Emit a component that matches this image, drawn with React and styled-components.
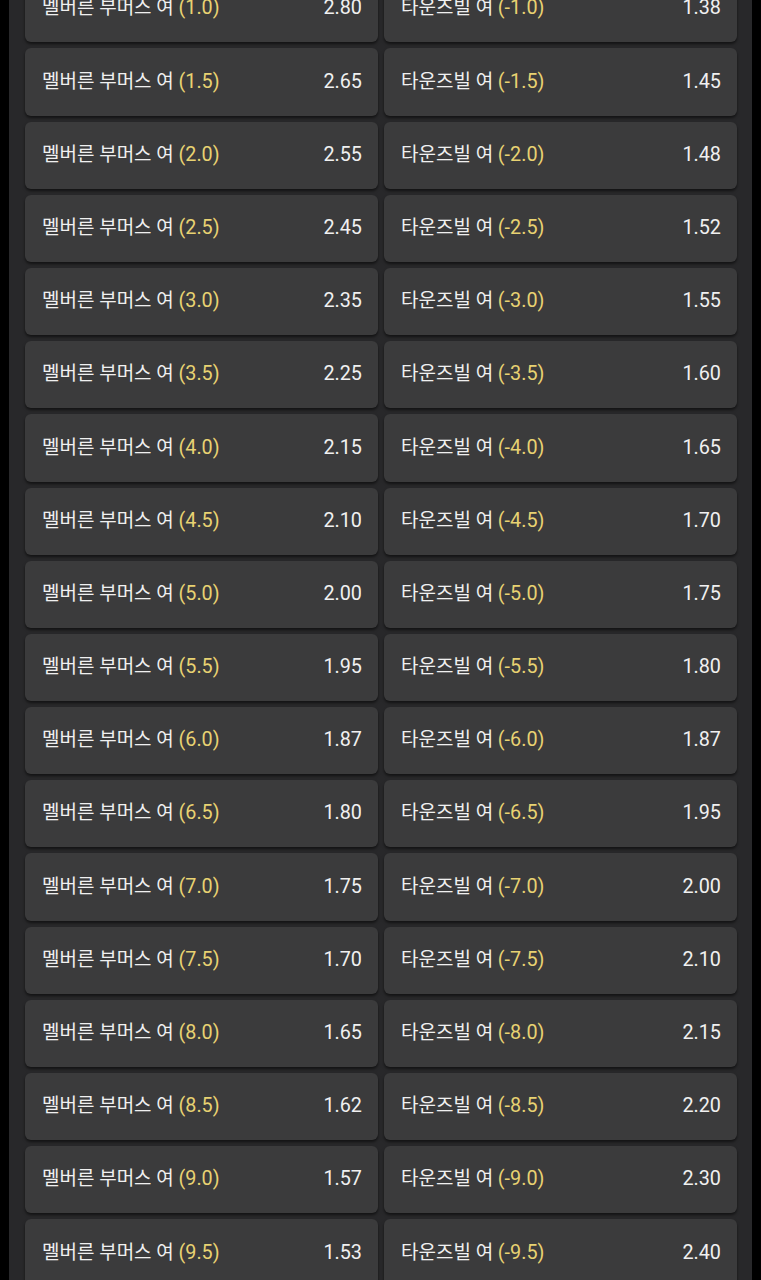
import React from "react";
import styled, { createGlobalStyle } from "styled-components";

const Global = createGlobalStyle`
  html, body { margin: 0; padding: 0; background: #000; overflow: hidden; }
  body { font-family: Roboto, "Noto Sans CJK KR", sans-serif; }
`;

const Page = styled.div`
  width: 761px;
  height: 1280px;
  overflow: hidden;
  background: #000;
  display: flex;
  justify-content: flex-start;
`;

const Panel = styled.div`
  margin-left: 9px;
  width: 743px;
  background: #28282a;
  padding: 0 15px 0 16px;
  box-sizing: border-box;
`;

const Grid = styled.div`
  margin-top: -24.8px;
  display: grid;
  grid-template-columns: 1fr 1fr;
  column-gap: 6px;
  row-gap: 6px;
`;

const Card = styled.div`
  height: 67.2px;
  box-sizing: border-box;
  background: #3b3b3c;
  border-radius: 6px;
  box-shadow: 0 2px 3px rgba(0, 0, 0, 0.55);
  display: flex;
  align-items: center;
  justify-content: space-between;
  padding: 0 16px 1px 17px;
  color: #f0f0f0;
  font-family: Roboto, "Noto Sans CJK KR", sans-serif;
  font-size: 19.8px;
  line-height: 1.2;
`;

const Label = styled.span`
  white-space: nowrap;
`;

const Name = styled.span`
  font-size: 19px;
`;

const Line = styled.span`
  color: #e8d272;
`;

const Odds = styled.span``;

const home = [
  ["1.0", "2.80"], ["1.5", "2.65"], ["2.0", "2.55"], ["2.5", "2.45"],
  ["3.0", "2.35"], ["3.5", "2.25"], ["4.0", "2.15"], ["4.5", "2.10"],
  ["5.0", "2.00"], ["5.5", "1.95"], ["6.0", "1.87"], ["6.5", "1.80"],
  ["7.0", "1.75"], ["7.5", "1.70"], ["8.0", "1.65"], ["8.5", "1.62"],
  ["9.0", "1.57"], ["9.5", "1.53"],
];
const away = [
  "1.38", "1.45", "1.48", "1.52", "1.55", "1.60", "1.65", "1.70", "1.75",
  "1.80", "1.87", "1.95", "2.00", "2.10", "2.15", "2.20", "2.30", "2.40",
];

export default function App() {
  return (
    <Page>
      <Global />
      <Panel>
        <Grid>
          {home.map(([line, odd], i) => (
            <React.Fragment key={line}>
              <Card>
                <Label>
                  <Name>멜버른 부머스 여 </Name>
                  <Line>({line})</Line>
                </Label>
                <Odds>{odd}</Odds>
              </Card>
              <Card>
                <Label>
                  <Name>타운즈빌 여 </Name>
                  <Line>(-{line})</Line>
                </Label>
                <Odds>{away[i]}</Odds>
              </Card>
            </React.Fragment>
          ))}
        </Grid>
      </Panel>
    </Page>
  );
}
